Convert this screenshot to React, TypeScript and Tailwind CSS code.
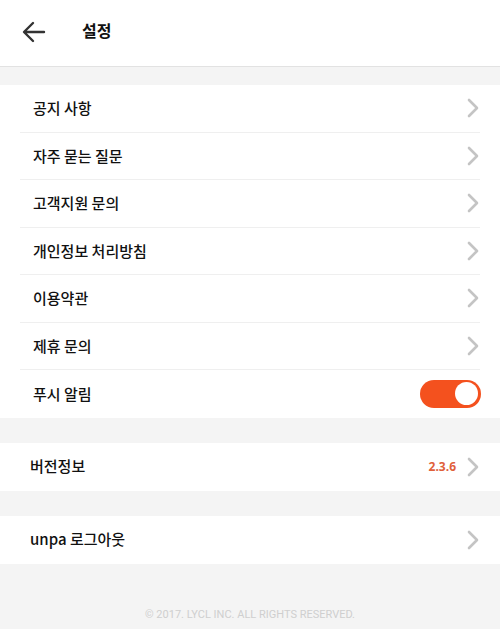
import React from "react";

const Chevron = () => (
  <svg width="14" height="20" viewBox="0 0 14 20" fill="none">
    <path d="M3 2 L11 10 L3 18" stroke="#c4c4c4" strokeWidth="2.6" strokeLinecap="round" strokeLinejoin="round" />
  </svg>
);

const Row = ({ label, last, right }: { label: string; last?: boolean; right?: React.ReactNode }) => (
  <div className={`mx-5 h-[47.5px] flex items-center justify-between ${last ? "" : "border-b border-[#efefef]"}`}>
    <span className="pl-[13px] text-[15px] font-medium text-[#111]">{label}</span>
    <div className="flex items-center">{right ?? <Chevron />}</div>
  </div>
);

export default function App() {
  return (
    <div
      className="w-[500px] h-[629px] bg-[#f4f4f4] flex flex-col"
      style={{ fontFamily: '"Noto Sans CJK KR", "Noto Sans", Roboto, sans-serif' }}
    >
      <div className="h-[67px] bg-white border-b border-[#e2e2e2] flex items-center shrink-0">
        <svg className="ml-[22px] -mt-[2px]" width="24" height="22" viewBox="0 0 24 22" fill="none">
          <path d="M22 11 H3 M11 2 L2 11 L11 20" stroke="#333" strokeWidth="2.4" strokeLinecap="round" strokeLinejoin="round" />
        </svg>
        <span className="ml-[36px] text-[16px] font-bold text-[#111] -mt-[7px]">설정</span>
      </div>
      <div className="mt-[18px] bg-white">
        <Row label="공지 사항" />
        <Row label="자주 묻는 질문" />
        <Row label="고객지원 문의" />
        <Row label="개인정보 처리방침" />
        <Row label="이용약관" />
        <Row label="제휴 문의" />
        <Row
          label="푸시 알림"
          last
          right={
            <div className="w-[61px] h-[28px] rounded-full bg-[#f4511e] flex items-center justify-end pr-[3px] -mr-[1px]">
              <div className="w-[23px] h-[23px] rounded-full bg-white" />
            </div>
          }
        />
      </div>
      <div className="mt-[25px] bg-white h-[48px] flex items-center justify-between px-5">
        <span className="pl-[10px] text-[15px] font-medium text-[#111]">버전정보</span>
        <div className="flex items-center gap-[10px]">
          <span className="text-[12px] font-bold text-[#e0603a]" style={{ fontFamily: '"Open Sans", sans-serif' }}>2.3.6</span>
          <Chevron />
        </div>
      </div>
      <div className="mt-[25px] bg-white h-[48px] flex items-center justify-between px-5">
        <span className="pl-[10px] text-[15px] font-medium text-[#111]">unpa 로그아웃</span>
        <Chevron />
      </div>
      <div className="mt-[43px] text-center text-[11px] text-[#cfcfcf]" style={{ fontFamily: 'Roboto, sans-serif' }}>
        © 2017. LYCL INC. ALL RIGHTS RESERVED.
      </div>
    </div>
  );
}
